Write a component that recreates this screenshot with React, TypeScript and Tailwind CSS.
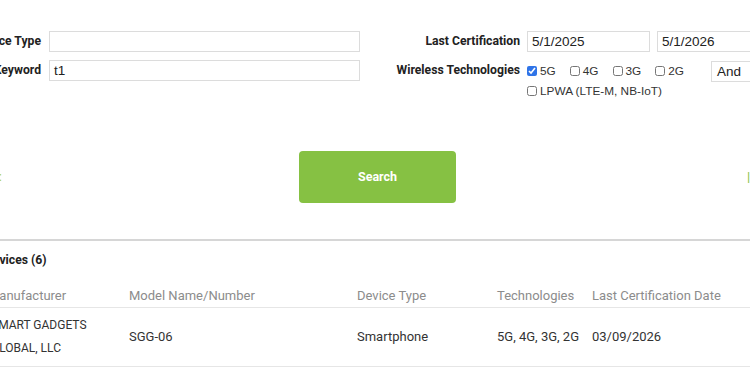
import React from "react";

const font = { fontFamily: "Roboto, 'Liberation Sans', sans-serif" };
const sys = { fontFamily: "'Liberation Sans', Arial, sans-serif" };

function Check({ label, checked }: { label: string; checked?: boolean }) {
  return (
    <label className="flex items-center gap-[3px] mr-[14px] text-[11.8px] text-[#333] leading-[20px]" style={sys}>
      <input
        type="checkbox"
        defaultChecked={checked}
        className="w-[10px] h-[10px] m-0 accent-[#2f74e8]"
      />
      <span>{label}</span>
    </label>
  );
}

export default function App() {
  return (
    <div className="w-[750px] h-[375px] overflow-hidden bg-white text-[#222]" style={font}>
      {/* form */}
      <div className="pt-[31px]">
        <div className="flex items-center h-[21px]">
          <div className="ml-[-60px] w-[109px] shrink-0 pr-[8px] text-right text-[12.2px] font-bold whitespace-nowrap">
            Device Type
          </div>
          <div className="w-[311px] h-[21px] shrink-0 border border-[#dcdcdc] bg-white" />
          <div className="w-[167px] shrink-0 pr-[7px] text-right text-[12.2px] font-bold whitespace-nowrap">
            Last Certification
          </div>
          <div className="w-[123px] h-[21px] shrink-0 border border-[#dcdcdc] px-[4px] text-[13.5px] leading-[19px] text-[#222]" style={sys}>
            5/1/2025
          </div>
          <div className="ml-[7px] w-[123px] h-[21px] shrink-0 border border-[#dcdcdc] px-[4px] text-[13.5px] leading-[19px] text-[#222]" style={sys}>
            5/1/2026
          </div>
        </div>
        <div className="flex items-start mt-[8px]">
          <div className="ml-[-60px] w-[109px] h-[21px] leading-[21px] shrink-0 pr-[8px] text-right text-[12.2px] font-bold whitespace-nowrap">
            Keyword
          </div>
          <div className="w-[311px] h-[21px] shrink-0 border border-[#dcdcdc] px-[4px] text-[13.5px] leading-[19px]" style={sys}>
            t1
          </div>
          <div className="w-[167px] h-[21px] leading-[21px] shrink-0 pr-[7px] text-right text-[12.2px] font-bold whitespace-nowrap">
            Wireless Technologies
          </div>
          <div className="w-[184px] shrink-0 pt-[1px]">
            <div className="flex items-center">
              <Check label="5G" checked />
              <Check label="4G" />
              <Check label="3G" />
              <Check label="2G" />
            </div>
            <div className="flex items-center">
              <Check label="LPWA (LTE-M, NB-IoT)" />
            </div>
          </div>
          <div className="mt-[1px] w-[70px] h-[21px] shrink-0 border border-[#dcdcdc] pl-[5px] text-[13.5px] leading-[19px]" style={sys}>
            And
          </div>
        </div>
      </div>

      {/* search row */}
      <div className="flex items-center mt-[50px] h-[52px]">
        <span className="ml-[-40px] w-[42px] shrink-0 text-[13px] text-[#a9cf4f] whitespace-nowrap overflow-hidden text-right">Reset:</span>
        <button className="ml-[297px] w-[157px] h-[52px] shrink-0 rounded-[4px] bg-[#86c143] text-white text-[12.5px] font-bold">
          Search
        </button>
        <span className="ml-[291px] shrink-0 text-[13px] text-[#86c143] whitespace-nowrap">|Export</span>
      </div>

      {/* divider */}
      <div className="mt-[36px] h-[2px] bg-[#d6d6d6]" />

      <div className="ml-[-15px] mt-[11px] text-[12.2px] font-bold leading-[16px] whitespace-nowrap">Devices (6)</div>

      {/* table */}
      <div className="mt-[16px] ml-[-12px] w-[780px]">
        <div className="flex items-center h-[24px] border-b border-[#e6e6e6] text-[13px] text-[#8c8c8c] whitespace-nowrap">
          <div className="w-[141px] shrink-0">Manufacturer</div>
          <div className="w-[228px] shrink-0">Model Name/Number</div>
          <div className="w-[140px] shrink-0">Device Type</div>
          <div className="w-[95px] shrink-0">Technologies</div>
          <div className="shrink-0">Last Certification Date</div>
        </div>
        <div className="flex items-center h-[59px] border-b border-[#e6e6e6] text-[13px] text-[#333] whitespace-nowrap">
          <div className="w-[141px] shrink-0 pl-[3px] leading-[23px] text-[12px]">
            SMART GADGETS
            <br />
            GLOBAL, LLC
          </div>
          <div className="w-[228px] shrink-0">SGG-06</div>
          <div className="w-[140px] shrink-0">Smartphone</div>
          <div className="w-[95px] shrink-0">5G, 4G, 3G, 2G</div>
          <div className="shrink-0">03/09/2026</div>
        </div>
      </div>
    </div>
  );
}
